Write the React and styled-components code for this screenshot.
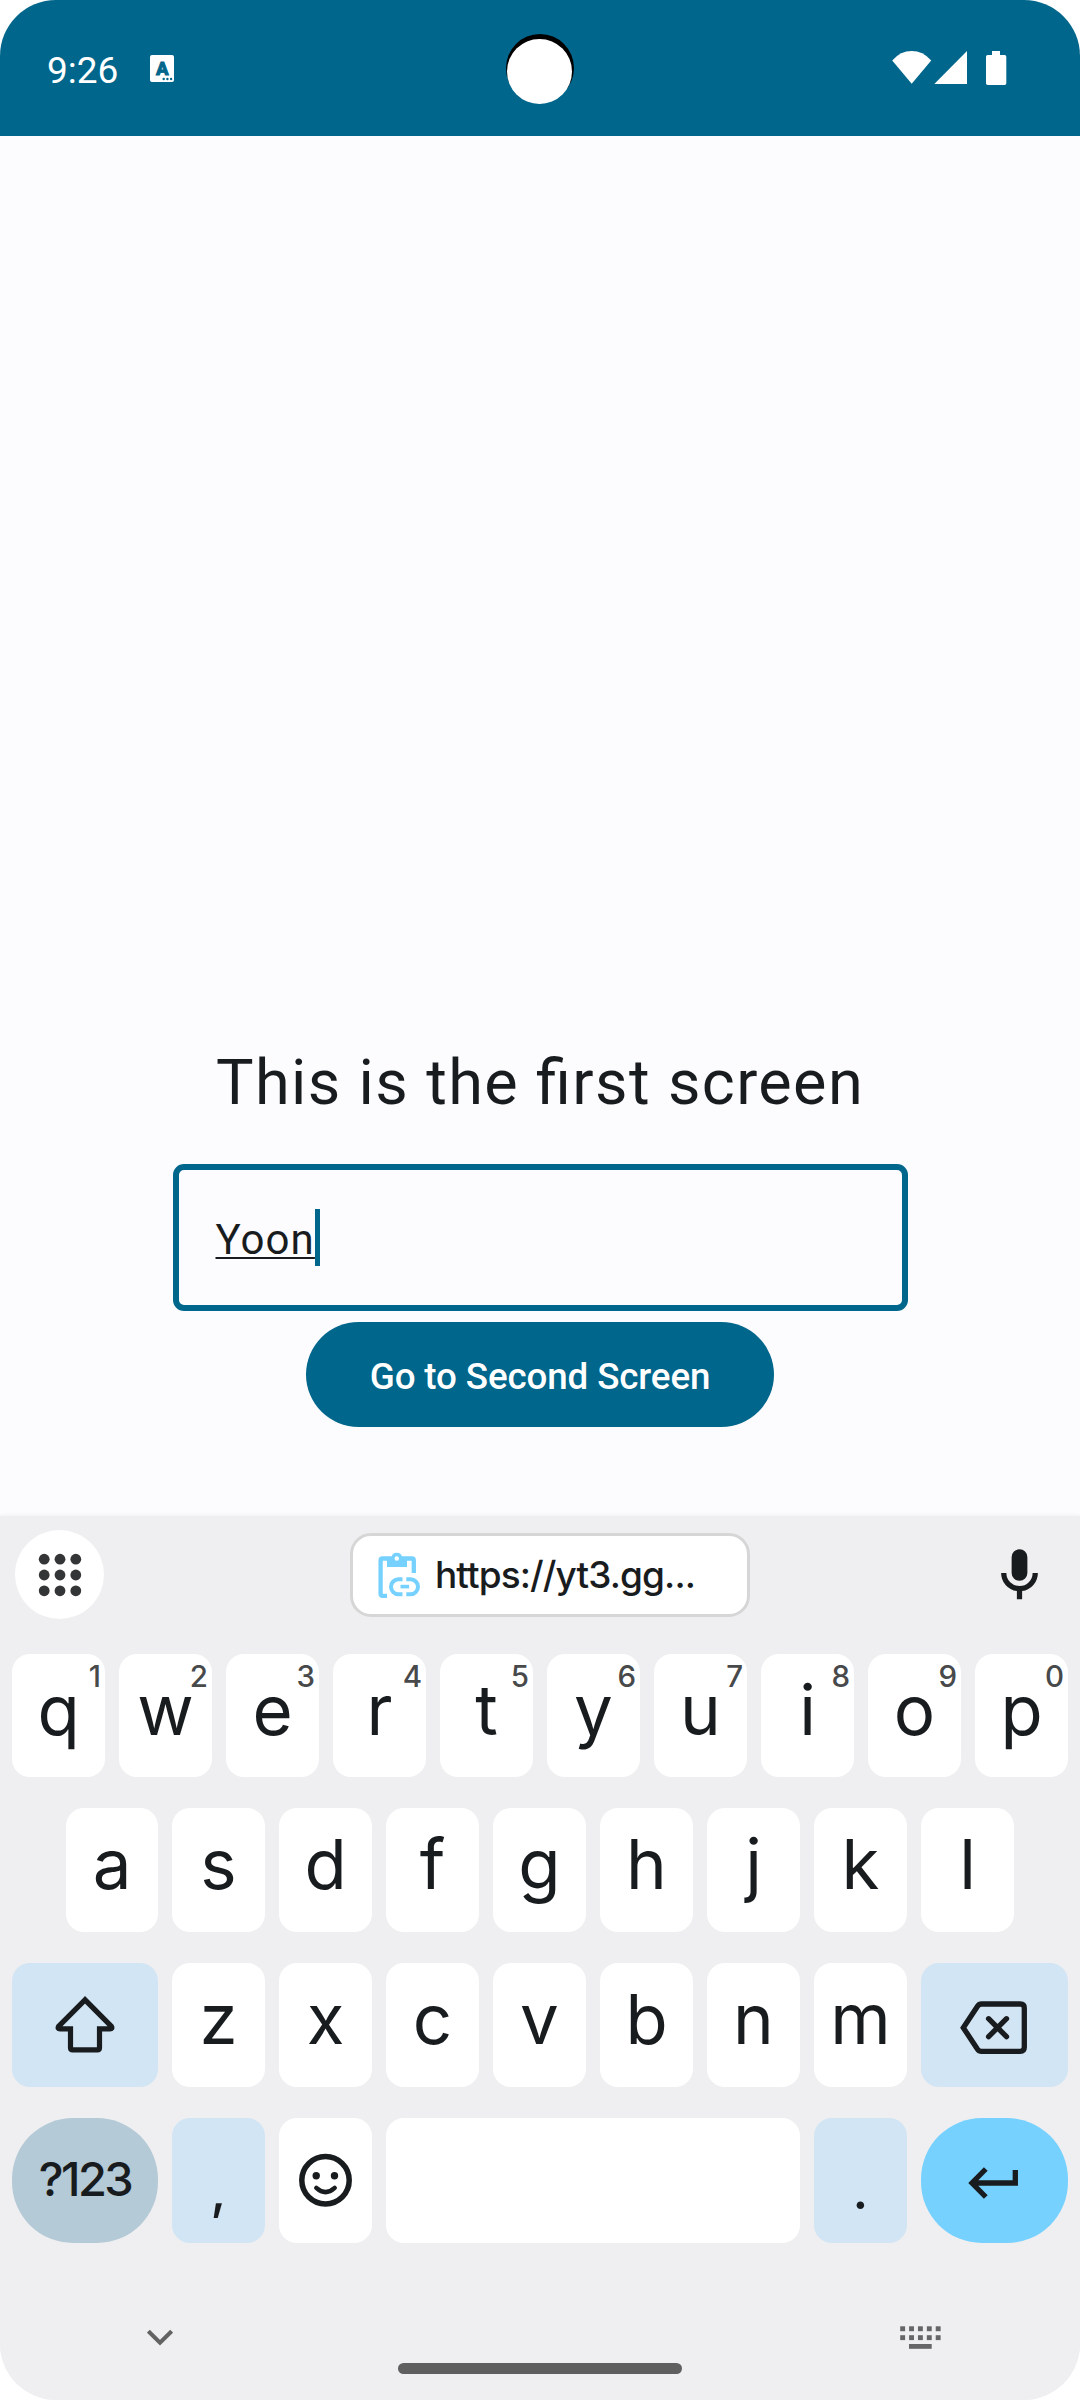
import React from "react";
import styled, { createGlobalStyle } from "styled-components";

const GlobalStyle = createGlobalStyle`
  * { box-sizing: border-box; }
  html, body { margin: 0; padding: 0; background: #ffffff; }
  body { font-family: Roboto, "Noto Sans", sans-serif; }
  svg { display: block; flex: none; }
`;

const TEAL = "#00668b";
const INK = "#191c1e";

const Screen = styled.div`
  position: relative;
  display: flex;
  flex-direction: column;
  width: 1080px;
  height: 2400px;
  overflow: hidden;
  border-radius: 56px;
  background: #fcfcff;
`;

const StatusBar = styled.header`
  display: flex;
  justify-content: space-between;
  height: 136px;
  padding: 0 73px 0 47px;
  background: ${TEAL};
  color: #ffffff;
`;

const StatusGroup = styled.div`
  display: flex;
  align-items: flex-start;
`;

const Clock = styled.time`
  margin-right: 32px;
  font-size: 37px;
  line-height: 43px;
  padding-top: 49px;
`;

const AppBadge = styled.div`
  position: relative;
  width: 24px;
  height: 27px;
  margin-top: 55px;
  border-radius: 2px;
  background: #ffffff;
  color: ${TEAL};
  font: 900 18.5px/28px Roboto, sans-serif;
  text-align: center;
  -webkit-text-stroke: 0.8px ${TEAL};
`;

const BadgeDots = styled.svg`
  position: absolute;
  right: 1px;
  bottom: 1px;
`;

const StatusIcons = styled.svg`
  margin-top: 50px;
`;

const Camera = styled.div`
  position: absolute;
  top: 34px;
  left: 506px;
  width: 68px;
  height: 68px;
  border-radius: 50%;
  background: #000000;

  &::after {
    content: "";
    position: absolute;
    top: 5px;
    left: 1px;
    width: 65px;
    height: 65px;
    border-radius: 50%;
    background: #ffffff;
  }
`;

const Content = styled.main`
  display: flex;
  flex-direction: column;
  align-items: center;
  justify-content: flex-end;
  height: 1380px;
  padding-bottom: 89px;
`;

const Title = styled.h1`
  margin: 0;
  font-size: 63px;
  font-weight: 400;
  line-height: 84px;
  letter-spacing: 1.38px;
  font-feature-settings: "liga" 1;
  color: ${INK};
  white-space: nowrap;
`;

const Field = styled.div`
  display: flex;
  align-items: center;
  width: 735px;
  height: 147px;
  margin-top: 39px;
  padding: 0 36px 0 37px;
  border: 6px solid ${TEAL};
  border-radius: 11px;
`;

const FieldText = styled.span`
  padding-top: 4px;
  font-size: 42px;
  line-height: 57px;
  letter-spacing: 1.1px;
  color: ${INK};
  text-decoration: underline;
  text-decoration-thickness: 2px;
  text-underline-offset: 3px;
  text-decoration-skip-ink: none;
`;

const Caret = styled.span`
  width: 5px;
  height: 57px;
  background: ${TEAL};
`;

const PrimaryButton = styled.button`
  width: 468px;
  height: 105px;
  margin-top: 11px;
  padding: 4px 0 0;
  border: 0;
  border-radius: 53px;
  background: ${TEAL};
  color: #ffffff;
  font: 500 36.75px/52px Roboto, sans-serif;
  letter-spacing: -0.13px;
`;

const Keyboard = styled.section`
  display: flex;
  flex-direction: column;
  height: 884px;
  background: #efeff1;
  box-shadow: 0 0 5px rgba(0, 0, 0, 0.07);
  font-family: Inter, Roboto, sans-serif;
  color: ${INK};
`;

const Toolbar = styled.div`
  display: flex;
  align-items: center;
  justify-content: space-between;
  height: 117px;
  margin-bottom: 21px;
  padding: 0 29px 0 15px;
`;

const RoundButton = styled.div`
  display: flex;
  align-items: center;
  justify-content: center;
  width: 89px;
  height: 89px;
  border-radius: 50%;
  background: #ffffff;
`;

const ClipChip = styled.div`
  display: flex;
  align-items: center;
  width: 400px;
  height: 84px;
  margin-left: 8px;
  padding-left: 23px;
  border: 3px solid #d6d6d7;
  border-radius: 21px;
  background: #ffffff;
`;

const ClipText = styled.span`
  margin-left: 13px;
  font-size: 37px;
  font-weight: 500;
  letter-spacing: -0.9px;
  white-space: nowrap;
`;

const MicIcon = styled.svg`
  margin-top: 2px;
`;

const Rows = styled.div`
  display: flex;
  flex-direction: column;
  gap: 31px;
`;

const Row = styled.div`
  display: flex;
  justify-content: center;
  gap: 14px;
  height: ${(p) => p.$height}px;
`;

const tones = {
  plain: "#ffffff",
  soft: "#d2e5f4",
  mode: "#b4cad6",
  action: "#76d1ff",
};

const Key = styled.div`
  position: relative;
  display: flex;
  align-items: ${(p) => (p.$icon ? "center" : "flex-start")};
  justify-content: center;
  width: ${(p) => p.$width || 93}px;
  border-radius: ${(p) => (p.$round ? 61 : 18)}px;
  background: ${(p) => tones[p.$tone || "plain"]};
`;

const Letter = styled.span`
  font-size: 69px;
  font-weight: 380;
  line-height: 113px;
`;

const Hint = styled.span`
  position: absolute;
  top: 4px;
  right: 4px;
  font-size: 29.5px;
  font-weight: 500;
  line-height: 37px;
  color: #47494b;
`;

const ModeLabel = styled.span`
  font-size: 47px;
  font-weight: 500;
  line-height: 122px;
  letter-spacing: -2.6px;
`;

const Punctuation = styled.span`
  font-size: 52px;
  font-weight: 500;
  line-height: 145px;
`;

const NavBar = styled.footer`
  display: flex;
  align-items: flex-start;
  justify-content: space-between;
  height: 157px;
  padding: 0 139px 0 147px;
`;

const NavIcon = styled.svg`
  margin-top: 83px;
`;

const HomeHandle = styled.div`
  width: 284px;
  height: 11px;
  margin-top: 120px;
  margin-left: 7px;
  border-radius: 6px;
  background: #5f5f5f;
`;

const SystemIcons = () => (
  <StatusIcons width="115" height="36" viewBox="892 50 115 36" fill="#fff">
    <path d="M911.7 83.7 892.2 60.4Q900.5 51 911.7 51T931.2 60.4Z" />
    <path d="M967 51V84H934.3Z" />
    <path d="M992 51h8v4h4.6q1.7 0 1.7 1.7V83.3q0 1.7-1.7 1.7h-16.9q-1.7 0-1.7-1.7V56.7q0-1.7 1.7-1.7H992Z" />
  </StatusIcons>
);

const GridDots = () => (
  <svg width="44" height="44" viewBox="0 0 44 44" fill="#333537">
    {[6.2, 22, 37.8].map((y) =>
      [6.2, 22, 37.8].map((x) => <circle key={`${x}-${y}`} cx={x} cy={y} r="5.4" />)
    )}
  </svg>
);

const ClipboardLink = () => (
  <svg width="46" height="48" viewBox="376 50 46 48" fill="none" stroke="#76d1ff" strokeWidth="4.3">
    <path d="M387 94.8H382.6Q380.6 94.8 380.6 92.8V59.5Q380.6 57.5 382.6 57.5H411.8Q413.8 57.5 413.8 59.5V72" />
    <path d="M387 56h4.5a5.4 5.4 0 0 1 10.6 0h4.9v10h-20z" fill="#76d1ff" stroke="none" />
    <circle cx="396.8" cy="57.5" r="2.2" fill="#fff" stroke="none" />
    <path d="M402.5 78.3H398.5a7.5 7.5 0 0 0 0 15H402.5M406.3 78.3H410.5a7.5 7.5 0 0 1 0 15H406.3" strokeWidth="4" />
    <path d="M400.5 85.6h8.6" strokeWidth="3.6" />
  </svg>
);

const Mic = () => (
  <MicIcon width="63" height="63" viewBox="0 0 24 24" fill={INK}>
    <path d="M12 14q-1.25 0-2.125-.875T9 11V5q0-1.25.875-2.125T12 2t2.125.875T15 5v6q0 1.25-.875 2.125T12 14Zm-1 7v-3.075q-2.6-.35-4.3-2.325T5 11h2q0 2.075 1.463 3.538T12 16t3.538-1.463T17 11h2q0 2.625-1.7 4.6T13 17.925V21Z" />
  </MicIcon>
);

const ShiftIcon = () => (
  <svg width="146" height="124" viewBox="12 1963 146 124" fill="none" stroke={INK} strokeWidth="5.2" strokeMiterlimit="10">
    <path d="M85 1999.8 58.6 2026.3Q57.2 2028.8 60 2028.8H70.5V2047.7Q70.5 2049.8 72.6 2049.8H97.4Q99.5 2049.8 99.5 2047.7V2028.8H110Q112.8 2028.8 111.4 2026.3Z" />
  </svg>
);

const BackspaceIcon = () => (
  <svg width="147" height="124" viewBox="921 1963 147 124" fill="none" stroke={INK} strokeWidth="5.3">
    <path d="M963.3 2027.7 977.5 2006.2Q979 2004 981.5 2004H1020.3Q1024.3 2004 1024.3 2008V2047.3Q1024.3 2051.3 1020.3 2051.3H981.5Q979 2051.3 977.5 2049.2Z" />
    <path d="m988.6 2018.7 17.9 18m0-18-17.9 18" strokeLinecap="round" />
  </svg>
);

const SmileIcon = () => (
  <svg width="93" height="125" viewBox="279 2118 93 125" fill="none" stroke={INK}>
    <circle cx="325.5" cy="2180.3" r="23.7" strokeWidth="5.5" />
    <circle cx="316.2" cy="2175.7" r="3.7" fill={INK} stroke="none" />
    <circle cx="334.5" cy="2175.7" r="3.7" fill={INK} stroke="none" />
    <path d="M316.3 2187.9Q325.5 2196.3 334.7 2187.9" strokeWidth="4.5" strokeLinecap="round" />
  </svg>
);

const EnterIcon = () => (
  <svg width="147" height="125" viewBox="921 2118 147 125" fill="none" stroke={INK} strokeWidth="5.3">
    <path d="M985.8 2169 972 2183 985.8 2197M972 2183H1015.3V2170" />
  </svg>
);

const topRow = ["q", "w", "e", "r", "t", "y", "u", "i", "o", "p"];
const homeRow = ["a", "s", "d", "f", "g", "h", "j", "k", "l"];
const lowerRow = ["z", "x", "c", "v", "b", "n", "m"];

export default function App() {
  return (
    <>
      <GlobalStyle />
      <Screen>
        <StatusBar>
          <StatusGroup>
            <Clock>9:26</Clock>
            <AppBadge>
              A
              <BadgeDots width="11" height="4" viewBox="0 0 11 4" fill={TEAL}>
                <circle cx="1.7" cy="2" r="1.2" />
                <circle cx="5.4" cy="2" r="1.2" />
                <circle cx="9.1" cy="2" r="1.2" />
              </BadgeDots>
            </AppBadge>
          </StatusGroup>
          <SystemIcons />
        </StatusBar>
        <Camera />

        <Content>
          <Title>This is the first screen</Title>
          <Field>
            <FieldText>Yoon</FieldText>
            <Caret />
          </Field>
          <PrimaryButton>Go to Second Screen</PrimaryButton>
        </Content>

        <Keyboard>
          <Toolbar>
            <RoundButton>
              <GridDots />
            </RoundButton>
            <ClipChip>
              <ClipboardLink />
              <ClipText>https://yt3.gg...</ClipText>
            </ClipChip>
            <Mic />
          </Toolbar>

          <Rows>
            <Row $height={123}>
              {topRow.map((c, i) => (
                <Key key={c}>
                  <Letter>{c}</Letter>
                  <Hint>{(i + 1) % 10}</Hint>
                </Key>
              ))}
            </Row>
            <Row $height={124}>
              {homeRow.map((c, i) => (
                <Key key={c} $width={i === 0 ? 92 : 93}>
                  <Letter>{c}</Letter>
                </Key>
              ))}
            </Row>
            <Row $height={124}>
              <Key $width={146} $tone="soft" $icon>
                <ShiftIcon />
              </Key>
              {lowerRow.map((c) => (
                <Key key={c}>
                  <Letter>{c}</Letter>
                </Key>
              ))}
              <Key $width={147} $tone="soft" $icon>
                <BackspaceIcon />
              </Key>
            </Row>
            <Row $height={125}>
              <Key $width={146} $tone="mode" $round>
                <ModeLabel>?123</ModeLabel>
              </Key>
              <Key $tone="soft">
                <Punctuation>,</Punctuation>
              </Key>
              <Key $icon>
                <SmileIcon />
              </Key>
              <Key $width={414} />
              <Key $tone="soft">
                <Punctuation>.</Punctuation>
              </Key>
              <Key $width={147} $tone="action" $round $icon>
                <EnterIcon />
              </Key>
            </Row>
          </Rows>

          <NavBar>
            <NavIcon width="26" height="24" viewBox="147 2326 26 24" fill="none" stroke="#636363" strokeWidth="4">
              <path d="M148.4 2331.2 160 2342.7 171.6 2331.2" />
            </NavIcon>
            <HomeHandle />
            <NavIcon width="41" height="24" viewBox="900 2326 41 24" fill="#666668">
              {[2326.3, 2335.2].map((y) =>
                [0, 1, 2, 3, 4].map((i) => (
                  <rect key={`${y}-${i}`} x={900.2 + i * 8.88} y={y} width="4.9" height="4.9" />
                ))
              )}
              <rect x="909" y="2344" width="22.7" height="4.8" />
            </NavIcon>
          </NavBar>
        </Keyboard>
      </Screen>
    </>
  );
}
